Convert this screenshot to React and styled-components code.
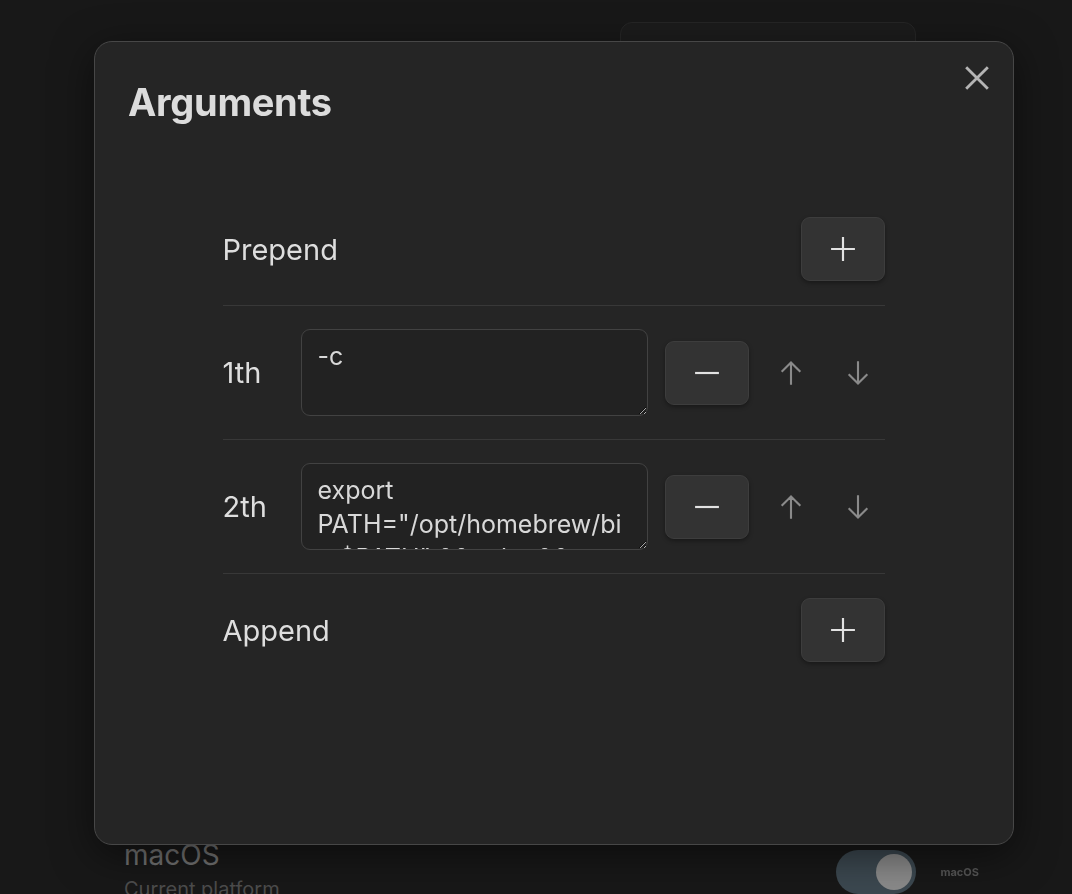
import styled, { createGlobalStyle } from "styled-components";

const Global = createGlobalStyle`
  html, body {
    margin: 0;
    padding: 0;
    background: #181818;
    color-scheme: dark;
  }
  body {
    font-family: Inter, "Noto Sans", sans-serif;
    overflow: hidden;
  }
`;

const Page = styled.div`
  width: 1072px;
  height: 894px;
  background: #181818;
  display: flex;
  flex-direction: column;
  justify-content: space-between;
  overflow: hidden;
`;

const BackCardRow = styled.div`
  display: flex;
  justify-content: flex-end;
  padding: 22px 156px 0 0;
`;

const BackCard = styled.div`
  width: 294px;
  height: 80px;
  border-radius: 12px;
  background: #1c1c1c;
  border: 1px solid #262626;
`;

const PlatformRow = styled.div`
  display: flex;
  align-items: center;
  justify-content: space-between;
  padding: 0 93px 0 124px;
  height: 56px;
  margin-bottom: -4px;
`;

const PlatformText = styled.div`
  display: flex;
  flex-direction: column;
  gap: 6px;
`;

const PlatformName = styled.div`
  font-size: 28px;
  color: #727272;
  line-height: 32px;
`;

const PlatformSub = styled.div`
  font-size: 20px;
  color: #4d4d4d;
  line-height: 24px;
`;

const ToggleGroup = styled.div`
  display: flex;
  align-items: center;
  gap: 24px;
  margin-top: 4px;
`;

const Track = styled.div`
  width: 80px;
  height: 44px;
  border-radius: 22px;
  background: #3c4850;
  display: flex;
  align-items: center;
  justify-content: flex-end;
  padding: 0 4px;
  box-sizing: border-box;
`;

const Thumb = styled.div`
  width: 36px;
  height: 36px;
  border-radius: 50%;
  background: #8a8a8a;
`;

const TinyLabel = styled.span`
  font-size: 11px;
  font-weight: 700;
  color: #555;
  filter: blur(0.6px);
`;

const Modal = styled.div`
  position: fixed;
  left: 94px;
  top: 41px;
  width: 920px;
  height: 804px;
  box-sizing: border-box;
  background: #252525;
  border: 1.5px solid #474747;
  border-radius: 18px;
  box-shadow: 0 10px 40px rgba(0, 0, 0, 0.5);
  padding: 36px 34px 0 33px;
`;

const Header = styled.div`
  display: flex;
  justify-content: space-between;
  align-items: flex-start;
`;

const Title = styled.h1`
  margin: 0;
  font-size: 38px;
  font-weight: 700;
  color: #dcdcdc;
  letter-spacing: -0.3px;
  line-height: 48px;
`;

const CloseButton = styled.button`
  background: none;
  border: none;
  padding: 0;
  margin: -22px -20px 0 0;
  width: 44px;
  height: 44px;
  display: flex;
  align-items: center;
  justify-content: center;
  color: #b4b4b4;
  cursor: pointer;
`;

const List = styled.div`
  width: 662px;
  margin: 67px auto 0;
  display: flex;
  flex-direction: column;
`;

const Row = styled.div`
  display: flex;
  align-items: center;
  padding: ${(p) => (p.$edge ? "24px 0" : "23px 0")};
  border-bottom: ${(p) => (p.$last ? "none" : "1.5px solid #383838")};
`;

const Label = styled.div`
  font-size: 29px;
  color: #dedede;
  width: ${(p) => (p.$wide ? "auto" : "78px")};
  flex: ${(p) => (p.$wide ? "1" : "none")};
`;

const Field = styled.textarea`
  width: 348px;
  height: 87px;
  box-sizing: border-box;
  background: #222222;
  border: 1.5px solid #424242;
  border-radius: 9px;
  color: #d8d8d8;
  font-family: Inter, "Noto Sans", sans-serif;
  font-size: 25px;
  line-height: 34px;
  padding: 9px 16px 6px;
  outline: none;
  resize: both;
  overflow: hidden;
`;

const SquareButton = styled.button`
  width: 84px;
  height: 64px;
  box-sizing: border-box;
  background: #333333;
  border: 1.5px solid #3d3d3d;
  border-radius: 9px;
  box-shadow: 0 2px 4px rgba(0, 0, 0, 0.35);
  color: #e2e2e2;
  display: flex;
  align-items: center;
  justify-content: center;
  margin-left: ${(p) => (p.$inline ? "17px" : "0")};
  cursor: pointer;
`;

const ArrowButton = styled.button`
  width: 54px;
  height: 54px;
  background: none;
  border: none;
  padding: 0;
  color: #8a8a8a;
  display: flex;
  align-items: center;
  justify-content: center;
  margin-left: ${(p) => (p.$first ? "15px" : "13px")};
  cursor: pointer;
`;

const Icon = ({ children, size = 26, stroke = 2 }) => (
  <svg
    width={size}
    height={size}
    viewBox="0 0 24 24"
    fill="none"
    stroke="currentColor"
    strokeWidth={stroke}
    strokeLinecap="butt"
  >
    {children}
  </svg>
);

const Plus = () => (
  <Icon size={26} stroke={2}>
    <path d="M12 1v22M1 12h22" />
  </Icon>
);

const Minus = () => (
  <Icon size={26} stroke={2}>
    <path d="M1 12h22" />
  </Icon>
);

const ArrowUp = () => (
  <Icon size={28} stroke={1.8}>
    <path d="M12 22V3M4 11l8-8 8 8" />
  </Icon>
);

const ArrowDown = () => (
  <Icon size={28} stroke={1.8}>
    <path d="M12 2v19M4 13l8 8 8-8" />
  </Icon>
);

const args = [
  { label: "1th", value: "-c" },
  {
    label: "2th",
    value: 'export PATH="/opt/homebrew/bin:$PATH" && cd ~ && exec zsh',
  },
];

export default function App() {
  return (
    <>
      <Global />
      <Page>
        <BackCardRow>
          <BackCard />
        </BackCardRow>
        <PlatformRow>
          <PlatformText>
            <PlatformName>macOS</PlatformName>
            <PlatformSub>Current platform</PlatformSub>
          </PlatformText>
          <ToggleGroup>
            <Track>
              <Thumb />
            </Track>
            <TinyLabel>macOS</TinyLabel>
          </ToggleGroup>
        </PlatformRow>
      </Page>
      <Modal>
        <Header>
          <Title>Arguments</Title>
          <CloseButton aria-label="Close">
            <svg width="26" height="26" viewBox="0 0 24 24" fill="none" stroke="currentColor" strokeWidth="2.6">
              <path d="M2 2l20 20M22 2L2 22" />
            </svg>
          </CloseButton>
        </Header>
        <List>
          <Row $edge>
            <Label $wide>Prepend</Label>
            <SquareButton>
              <Plus />
            </SquareButton>
          </Row>
          {args.map((a) => (
            <Row key={a.label}>
              <Label>{a.label}</Label>
              <Field defaultValue={a.value} spellCheck={false} />
              <SquareButton $inline>
                <Minus />
              </SquareButton>
              <ArrowButton $first>
                <ArrowUp />
              </ArrowButton>
              <ArrowButton>
                <ArrowDown />
              </ArrowButton>
            </Row>
          ))}
          <Row $edge $last>
            <Label $wide>Append</Label>
            <SquareButton>
              <Plus />
            </SquareButton>
          </Row>
        </List>
      </Modal>
    </>
  );
}
